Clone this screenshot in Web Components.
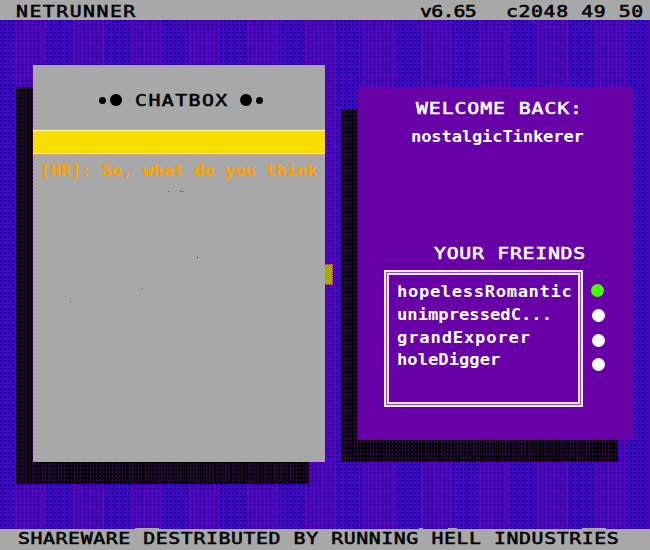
<!DOCTYPE html>
<html lang="en"><head><meta charset="utf-8"><title>Netrunner</title>
<style>html,body{margin:0;width:650px;height:550px;overflow:hidden}</style></head><body>
<net-desktop></net-desktop>
<script>
const tile = (w, h, base, dots) => `url("data:image/svg+xml,${encodeURIComponent(`<svg xmlns="http://www.w3.org/2000/svg" width="${w}" height="${h}" shape-rendering="crispEdges"><rect width="${w}" height="${h}" fill="${base}"/>${dots}</svg>`)}")`;
const r = (x, y, w, h, c) => `<rect x="${x}" y="${y}" width="${w}" height="${h}" fill="${c}"/>`;
let blue = '', dark = '';
for (const x of [0, 4, 8, 12, 17, 21, 25]) {
  blue += r(x, 0, 2, 2, '#0800b0') + r(x + 2, 2, 1, 1, '#1500b0') + r(x, 3, 2, 1, '#5000c0') + r(x + 1, 2, 1, 1, '#5000c8') + r(x + 2, 0, 1, 1, '#4800b8');
}
for (const x of [0, 3, 6, 9, 13, 16, 19, 22, 26]) {
  dark += r(x, 0, 1, 2, '#430070') + r(x + 1, 2, 1, 1, '#35005c');
}
const root = document.documentElement.style;
root.setProperty('--weave', tile(29, 4, '#6300b2', blue));
root.setProperty('--shade', tile(29, 4, '#070009', dark));

const define = (name, html, ready) => customElements.define(name, class extends HTMLElement {
  connectedCallback() {
    if (this.shadowRoot) return;
    this.attachShadow({ mode: 'open' }).innerHTML = html;
    if (ready) ready(this, this.shadowRoot);
  }
});

// A line of terminal lettering spread over the width given in its attribute.
define('pixel-text', `<style>
:host{display:block;flex:none;height:20px;font:bold 16.5px/20px "DejaVu Sans Mono",monospace;white-space:pre;color:inherit}
:host([caps]){font-weight:400;-webkit-text-stroke:.55px currentColor}
span{display:inline-block;transform-origin:0 50%}</style><span><slot></slot></span>`, (el, s) => {
  const w = +el.getAttribute('width'), k = el.hasAttribute('caps') ? 1.2 : 1.04;
  const span = s.querySelector('span');
  el.style.width = w + 'px';
  const n = el.textContent.length;
  span.style.letterSpacing = ((w / k - span.offsetWidth) / (n - .85)) + 'px';
  span.style.transform = `scaleX(${k})`;
});

define('status-bar', `<style>:host{display:flex;box-sizing:border-box;background:#a8a8a8;color:#000;flex:none}</style><slot></slot>`);

define('shadow-window', `<style>
:host{display:block;position:relative;flex:none;background:var(--face)}
:host::before{content:"";position:absolute;z-index:-1;inset:22px 16px -22px -17px;background:var(--shade)}
</style><slot></slot>`);

define('status-dot', `<style>:host{display:block;flex:none;width:13px;height:13px;border-radius:50%;background:#fff}
:host([online]){background:#48ff00}</style>`);

define('chat-box', `<style>
:host{display:flex;flex-direction:column;height:100%}
header{display:flex;align-items:center;height:20px;padding:25px 0 20px 66px;color:#000}
header pixel-text{margin-top:2px}
i{display:block;border-radius:50%;background:#000;flex:none}.s{width:7px;height:7px}.b{width:12px;height:12px}
.s+.b{margin:0 13px 0 4px}.b.r{margin:0 4px 0 12px}
.input{height:22px;background:#f9df00;border:solid #ffffa0;border-width:1px 0;box-shadow:0 -1px #dc9d8e,0 1px #dc9d8e}
.message{padding:7px 0 0 7px;color:#ffa000}
svg{display:block;flex:1;width:100%}
</style><header><i class="s"></i><i class="b"></i><pixel-text caps width="93">CHATBOX</pixel-text><i class="b r"></i><i class="s"></i></header>
<div class="input"></div><div class="message"><pixel-text width="277">[HR]: So, what do you think</pixel-text></div>
<svg viewBox="0 0 292 281" preserveAspectRatio="xMinYMin" shape-rendering="crispEdges"><g fill="#704797"><path d="M135 10h1v1h-1zM147 10h2v1h-2zM150 10h1v1h-1zM108 107h1v1h-1zM37 120h1v1h-1z"/><path fill="#351f45" d="M164 76h1v1h-1z"/></g></svg>`);

define('friends-panel', `<style>
:host{display:block;color:#fff}
.welcome{padding:12px 0 0 58px}.user{padding:8px 0 0 53px}.title{padding:97px 0 0 76px}
.row{display:flex;padding:6px 0 0 26px}
.list{box-sizing:border-box;width:199px;height:137px;border:2px solid #f5eafa;padding:1px;background:#8f48be}
.inner{height:100%;box-sizing:border-box;border:2px solid #eee0f6;background:#6800a8;padding:7px 0 0 8px;display:flex;flex-direction:column;gap:2.8px}
.dots{display:flex;flex-direction:column;gap:11.8px;padding:14px 0 0 9px}
.dots status-dot:first-child{margin-left:-1px}
</style><div class="welcome"><pixel-text caps width="166">WELCOME BACK:</pixel-text></div>
<div class="user"><pixel-text width="173">nostalgicTinkerer</pixel-text></div>
<div class="title"><pixel-text caps width="151">YOUR FREINDS</pixel-text></div>
<div class="row"><div class="list"><div class="inner">
<pixel-text width="175">hopelessRomantic</pixel-text><pixel-text width="155">unimpressedC...</pixel-text><pixel-text width="133">grandExporer</pixel-text><pixel-text width="103">holeDigger</pixel-text>
</div></div><div class="dots"><status-dot online></status-dot><status-dot></status-dot><status-dot></status-dot><status-dot></status-dot></div></div>`);

define('net-desktop', `<style>
:host{display:flex;flex-direction:column;position:relative;isolation:isolate;width:650px;height:550px}
.wall{display:flex;flex:1;align-items:flex-start;padding-left:33px;gap:33px;position:relative;isolation:isolate;background:var(--weave)}
.chat{--face:#a8a8a8;width:292px;height:397px;margin-top:45px}
.home{--face:#6800a8;width:276px;height:353px;margin-top:67px}
.tab{position:absolute;right:-8px;top:199px;width:8px;height:21px;box-sizing:border-box;background:#a8a800;border:1px dotted #803c30;border-left:0}
.top{height:20px;padding:2px 7px 0 16px}.gap{flex:1}.ver{margin-right:29px}
.bottom{height:21px;padding-left:18px;position:relative}
.notch{position:absolute;top:-1px;height:1px;background:#a8a8a8}
</style><status-bar class="top"><pixel-text caps width="119">NETRUNNER</pixel-text><div class="gap"></div><pixel-text caps class="ver" width="57">v6.65</pixel-text><pixel-text caps width="137">c2048 49 50</pixel-text></status-bar>
<div class="wall"><shadow-window class="chat"><chat-box></chat-box><div class="tab"></div></shadow-window>
<shadow-window class="home"><friends-panel></friends-panel></shadow-window></div>
<status-bar class="bottom"><pixel-text caps width="601">SHAREWARE DESTRIBUTED BY RUNNING HELL INDUSTRIES</pixel-text>
<div class="notch" style="left:135px;width:24px"></div><div class="notch" style="left:419px;width:4px"></div><div class="notch" style="left:448px;width:9px"></div><div class="notch" style="left:582px;width:24px"></div></status-bar>`);
</script></body></html>
